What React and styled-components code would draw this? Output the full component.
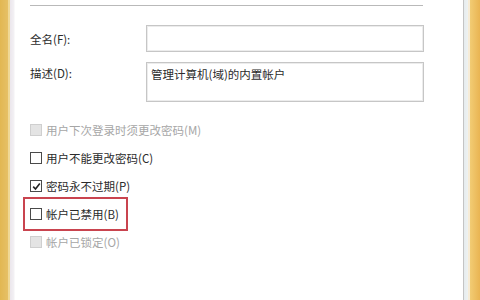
import React from 'react';
import styled, { createGlobalStyle, css } from 'styled-components';

const GlobalStyle = createGlobalStyle`
  html, body {
    margin: 0;
    padding: 0;
    background: #ffffff;
  }
  #root {
    width: 480px;
    height: 300px;
    overflow: hidden;
  }
`;

const Window = styled.div`
  display: flex;
  width: 480px;
  height: 300px;
  font-family: "Noto Sans CJK SC", "Liberation Sans", sans-serif;
  font-size: 11.5px;
  color: #2b2b2b;
`;

const LeftFrame = styled.div`
  flex: 0 0 15px;
  background: linear-gradient(
    to right,
    #e2b752 0px,
    #e6c066 8px,
    #f0d894 8px,
    #f0d894 10px,
    #ebe6ec 10px,
    #f3f1f4 14px,
    #ffffff 15px
  );
`;

const RightFrame = styled.div`
  flex: 0 0 17px;
  background: linear-gradient(
    to right,
    #c4c4c4 0px,
    #c4c4c4 1px,
    #e6ecee 1px,
    #eef2f2 5px,
    #f6ecd8 5px,
    #f6ecd8 7px,
    #f2cc74 7px,
    #e9b452 17px
  );
`;

const Content = styled.div`
  flex: 1;
  display: flex;
  flex-direction: column;
  padding-left: 15px;
`;

const Divider = styled.div`
  margin-top: 5px;
  width: 393px;
  height: 1px;
  background: #b9b9b9;
`;

const Fields = styled.div`
  display: grid;
  grid-template-columns: 116px 278px;
  row-gap: 10px;
  margin-top: 19px;
`;

const Label = styled.label`
  align-self: ${p => (p.$top ? 'start' : 'center')};
  padding-top: ${p => (p.$top ? '3px' : '0')};
  line-height: 16px;
`;

const boxBorder = css`
  box-sizing: border-box;
  border: 1px solid #c6c6c6;
  box-shadow: inset 0 0 0 1px #ececec;
  background: #ffffff;
  font-family: inherit;
  font-size: inherit;
  color: inherit;
  outline: none;
  margin: 0;
`;

const TextInput = styled.input`
  ${boxBorder}
  height: 27px;
  padding: 0 4px;
`;

const TextArea = styled.textarea`
  ${boxBorder}
  height: 40px;
  padding: 3px 4px;
  line-height: 16px;
  resize: none;
  overflow: hidden;
`;

const Options = styled.div`
  display: flex;
  flex-direction: column;
  margin-top: 14px;
`;

const Option = styled.div`
  position: relative;
  display: flex;
  align-items: center;
  gap: 4px;
  height: 28px;
  color: ${p => (p.$disabled ? '#a6a6a6' : '#2b2b2b')};

  ${p =>
    p.$highlight &&
    css`
      &::after {
        content: '';
        position: absolute;
        left: -7px;
        top: -3px;
        width: 105px;
        height: 34px;
        box-sizing: border-box;
        border: 2px solid #c9444f;
      }
    `}
`;

const Box = styled.span`
  box-sizing: border-box;
  width: 12px;
  height: 12px;
  display: inline-flex;
  align-items: center;
  justify-content: center;
  border: 1px solid ${p => (p.$disabled ? '#cfcfcf' : '#4a4a4a')};
  background: ${p => (p.$disabled ? '#e4e4e4' : '#ffffff')};
`;

const Check = () => (
  <svg width="9" height="9" viewBox="0 0 9 9">
    <path d="M1.2 4.6 L3.5 7 L7.8 1.6" fill="none" stroke="#222" strokeWidth="1.6" />
  </svg>
);

const options = [
  { text: '用户下次登录时须更改密码(M)', disabled: true },
  { text: '用户不能更改密码(C)' },
  { text: '密码永不过期(P)', checked: true },
  { text: '帐户已禁用(B)', highlight: true },
  { text: '帐户已锁定(O)', disabled: true },
];

export default function App() {
  return (
    <>
      <GlobalStyle />
      <Window>
        <LeftFrame />
        <Content>
          <Divider />
          <Fields>
            <Label htmlFor="fullname">全名(F):</Label>
            <TextInput id="fullname" type="text" defaultValue="" />
            <Label htmlFor="desc" $top>描述(D):</Label>
            <TextArea id="desc" readOnly value="管理计算机(域)的内置帐户" />
          </Fields>
          <Options>
            {options.map(o => (
              <Option key={o.text} $disabled={o.disabled} $highlight={o.highlight}>
                <Box $disabled={o.disabled}>{o.checked && <Check />}</Box>
                <span>{o.text}</span>
              </Option>
            ))}
          </Options>
        </Content>
        <RightFrame />
      </Window>
    </>
  );
}
